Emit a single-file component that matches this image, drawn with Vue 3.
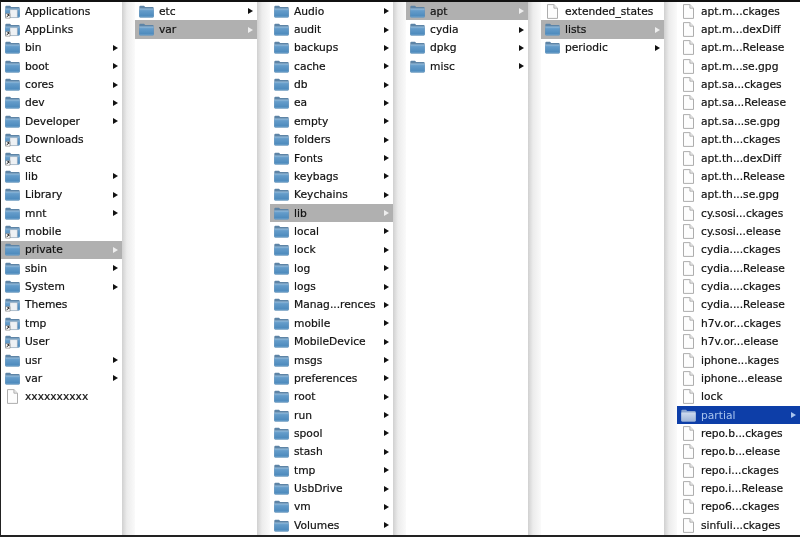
<template>
  <div class="browser">
    <svg class="defs" aria-hidden="true">
      <defs>
        <linearGradient id="body" x1="0" y1="0" x2="0" y2="1">
          <stop offset="0" stop-color="#9cc0dc" />
          <stop offset="0.25" stop-color="#649cca" />
          <stop offset="0.8" stop-color="#4f8cbe" />
          <stop offset="1" stop-color="#78a8ce" />
        </linearGradient>
        <linearGradient id="bodyActive" x1="0" y1="0" x2="0" y2="1">
          <stop offset="0" stop-color="#d0dcef" />
          <stop offset="1" stop-color="#9db4d8" />
        </linearGradient>
      </defs>
    </svg>
    <div v-for="(col, i) in columns" :key="i" class="column">
      <div
        v-for="item in col"
        :key="item.name"
        class="row"
        :class="{ selected: item.sel === 1, active: item.sel === 2 }"
      >
        <svg v-if="item.type === 'file'" class="icon" viewBox="0 0 15 15">
          <path d="M2.5 .6h6.4L12.5 4.2V14.4H2.5z" fill="#fdfdfd" stroke="#a4a4a4" stroke-width=".9" />
          <path d="M8.9 .6V4.2h3.6" fill="#e8e8e8" stroke="#a4a4a4" stroke-width=".8" />
        </svg>
        <svg v-else class="icon" viewBox="0 0 15 15">
          <path d="M.3 3Q.3 1.8 1.4 1.8H5L6.2 3H13.6Q14.7 3 14.7 4.1V12.6Q14.7 13.6 13.6 13.6H1.4Q.3 13.6 .3 12.6z" :fill="item.sel === 2 ? '#8aa4cf' : '#5d84a6'" />
          <path d="M.3 4.4H14.7V12.6Q14.7 13.6 13.6 13.6H1.4Q.3 13.6 .3 12.6z" :fill="item.sel === 2 ? 'url(#bodyActive)' : 'url(#body)'" />
          <template v-if="item.type === 'alias'">
            <path d="M5 5.6h7.4v8H5z" fill="#eef1f4" stroke="#8a98a6" stroke-width=".4" />
            <path d="M.6 9.6h4.4v4.6H.6z" fill="#fff" stroke="#666" stroke-width=".5" />
            <path d="M1.6 13.2L3.8 10.8M2.4 10.6h1.5v1.5" fill="none" stroke="#111" stroke-width=".9" />
          </template>
        </svg>
        <span class="name">{{ item.name }}</span>
        <span v-if="item.type === 'dir'" class="arrow"></span>
      </div>
    </div>
  </div>
</template>

<script setup>
// d = folder with arrow, a = alias, f = file
const build = (list, selected, sel = 1) =>
  list.map((entry) => {
    const [code, name] = [entry[0], entry.slice(2)]
    const type = { d: 'dir', a: 'alias', f: 'file' }[code]
    return { name, type, sel: name === selected ? sel : 0 }
  })

const dirs = (names) => names.map((n) => 'd ' + n)

const columns = [
  build(
    ['a Applications', 'a AppLinks', 'd bin', 'd boot', 'd cores', 'd dev', 'd Developer', 'a Downloads', 'a etc', 'd lib', 'd Library', 'd mnt', 'a mobile', 'd private', 'd sbin', 'd System', 'a Themes', 'a tmp', 'a User', 'd usr', 'd var', 'f xxxxxxxxxx'],
    'private'
  ),
  build(dirs(['etc', 'var']), 'var'),
  build(
    dirs(['Audio', 'audit', 'backups', 'cache', 'db', 'ea', 'empty', 'folders', 'Fonts', 'keybags', 'Keychains', 'lib', 'local', 'lock', 'log', 'logs', 'Manag...rences', 'mobile', 'MobileDevice', 'msgs', 'preferences', 'root', 'run', 'spool', 'stash', 'tmp', 'UsbDrive', 'vm', 'Volumes']),
    'lib'
  ),
  build(dirs(['apt', 'cydia', 'dpkg', 'misc']), 'apt'),
  build(['f extended_states', 'd lists', 'd periodic'], 'lists'),
  build(
    ['apt.m...ckages', 'apt.m...dexDiff', 'apt.m...Release', 'apt.m...se.gpg', 'apt.sa...ckages', 'apt.sa...Release', 'apt.sa...se.gpg', 'apt.th...ckages', 'apt.th...dexDiff', 'apt.th...Release', 'apt.th...se.gpg', 'cy.sosi...ckages', 'cy.sosi...elease', 'cydia....ckages', 'cydia....Release', 'cydia....ckages ', 'cydia....Release ', 'h7v.or...ckages', 'h7v.or...elease', 'iphone...kages', 'iphone...elease', 'lock']
      .map((n) => 'f ' + n)
      .concat(['d partial'])
      .concat(['repo.b...ckages', 'repo.b...elease', 'repo.i...ckages', 'repo.i...Release', 'repo6...ckages', 'sinfuli...ckages'].map((n) => 'f ' + n)),
    'partial',
    2
  ),
]
</script>

<style scoped>
.browser {
  box-sizing: border-box;
  width: 800px;
  height: 537px;
  display: grid;
  grid-template-columns: 134px 135px 136px 135px 136px 123px;
  background: #fff;
  border-top: 2px solid #111;
  border-bottom: 2px solid #222;
  border-left: 1px solid #222;
  overflow: hidden;
  font-family: "DejaVu Sans", Verdana, sans-serif;
  font-size: 10.7px;
  color: #111;
  -webkit-text-stroke: 0.2px #111;
  filter: blur(0.3px);
}

.defs {
  position: absolute;
  width: 0;
  height: 0;
}

.column {
  min-width: 0;
  overflow: hidden;
  padding-right: 13px;
  background: linear-gradient(to right, #fff calc(100% - 13px), #d0d0d0 calc(100% - 13px), #ececec calc(100% - 8px), #fafafa 100%);
}

.column:last-child {
  padding-right: 0;
  background: #fff;
}

.row {
  display: flex;
  align-items: center;
  height: 18.36px;
  padding-left: 4px;
  padding-right: 4px;
}

.column:first-child .row {
  padding-left: 3px;
}

.column:first-child .name {
  margin-left: 3px;
}

.selected {
  background: #b0b0b0;
}

.active {
  background: #0d3ea8;
  color: #a9c4ee;
  -webkit-text-stroke: 0;
}

.icon {
  flex: none;
  width: 15px;
  height: 15px;
}

.name {
  flex: 1;
  min-width: 0;
  margin-left: 5px;
  white-space: nowrap;
}

.arrow {
  flex: none;
  width: 0;
  height: 0;
  border-top: 3px solid transparent;
  border-bottom: 3px solid transparent;
  border-left: 5px solid #111;
}

.selected .arrow {
  border-left-color: #eee;
}

.active .arrow {
  border-left-color: #a9c4ee;
}
</style>
